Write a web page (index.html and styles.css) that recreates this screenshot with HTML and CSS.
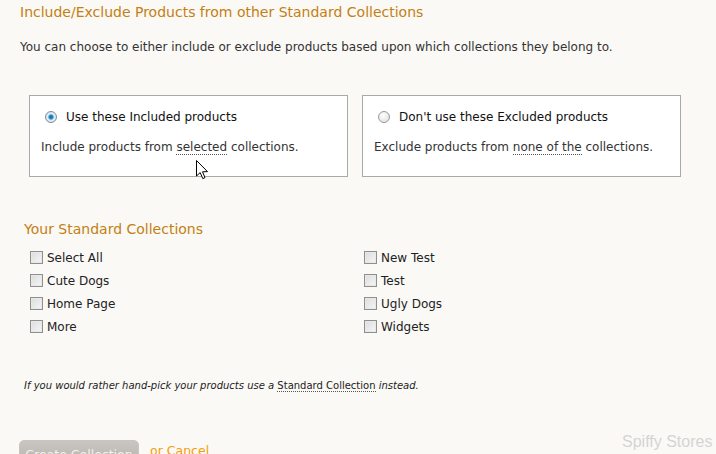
FILE: index.html
```html
<!DOCTYPE html>
<html>
<head>
<meta charset="utf-8">
<link rel="stylesheet" href="styles.css">
</head>
<body>
<div class="page">
  <h2 class="title">Include/Exclude Products from other Standard Collections</h2>
  <p class="intro">You can choose to either include or exclude products based upon which collections they belong to.</p>

  <div class="choices">
    <div class="choice">
      <label class="choice-label"><span class="radio checked"></span>Use these Included products</label>
      <p class="choice-desc">Include products from <span class="dotted">selected</span> collections.</p>
    </div>
    <div class="choice">
      <label class="choice-label"><span class="radio"></span>Don't use these Excluded products</label>
      <p class="choice-desc">Exclude products from <span class="dotted">none of the</span> collections.</p>
    </div>
  </div>

  <h3 class="subtitle">Your Standard Collections</h3>
  <div class="collections">
    <div class="col">
      <label class="item"><span class="check"></span>Select All</label>
      <label class="item"><span class="check"></span>Cute Dogs</label>
      <label class="item"><span class="check"></span>Home Page</label>
      <label class="item"><span class="check"></span>More</label>
    </div>
    <div class="col">
      <label class="item"><span class="check"></span>New Test</label>
      <label class="item"><span class="check"></span>Test</label>
      <label class="item"><span class="check"></span>Ugly Dogs</label>
      <label class="item"><span class="check"></span>Widgets</label>
    </div>
  </div>

  <p class="note">If you would rather hand-pick your products use a <span class="dotted upright">Standard Collection</span> instead.</p>

  <div class="actions">
    <button class="btn">Create Collection</button>
    <a class="cancel">or Cancel</a>
  </div>
</div>

<svg class="cursor" width="13" height="20" viewBox="0 0 13 20">
  <path d="M0.5 0.5 L0.5 16 L4.2 12.6 L6.8 18.6 L9 17.6 L6.5 11.8 L11.5 11.6 Z" fill="#fff" stroke="#000" stroke-width="1" stroke-linejoin="miter"/>
</svg>
<div class="watermark">Spiffy Stores</div>
</body>
</html>
```

FILE: styles.css
```css
html, body {
  margin: 0;
  padding: 0;
  background: #faf9f6;
  height: 454px;
  overflow: hidden;
}
body {
  font-family: "DejaVu Sans", Verdana, sans-serif;
  font-size: 12px;
  color: #222;
  position: relative;
}
.page {
  padding: 2px 0 0 20px;
}
.title {
  margin: 0;
  font-weight: normal;
  font-size: 14px;
  line-height: 20px;
  color: #c47f12;
}
.intro {
  margin: 17px 0 0 0;
  line-height: 16px;
  color: #333;
}
.choices {
  display: flex;
  gap: 14px;
  margin: 40px 0 0 9px;
}
.choice {
  box-sizing: border-box;
  width: 319px;
  height: 82px;
  background: #fff;
  border: 1px solid #a9a9a9;
  padding: 13px 0 0 11px;
}
.choice-label {
  display: flex;
  align-items: center;
  height: 16px;
  color: #111;
}
.radio {
  box-sizing: border-box;
  width: 12px;
  height: 12px;
  border-radius: 50%;
  border: 1px solid #9a9a9a;
  background: radial-gradient(circle at 40% 35%, #fff 0, #e6e6e6 70%, #cfcfcf 100%);
  margin: 0 9px 0 4px;
}
.radio.checked {
  background: radial-gradient(circle at 50% 50%, #1a6ea8 0, #1d86c8 25%, #4aa6dc 33%, #e8eef2 45%, #cfd7dd 100%);
  border-color: #7c8e9c;
}
.choice-desc {
  margin: 14px 0 0 0;
  line-height: 16px;
  color: #333;
}
.dotted {
  border-bottom: 1px dotted #555;
}
.subtitle {
  margin: 43px 0 0 4px;
  font-weight: normal;
  font-size: 14px;
  line-height: 18px;
  color: #c47f12;
}
.collections {
  display: grid;
  grid-template-columns: 334px 200px;
  margin: 8px 0 0 10px;
}
.col {
  display: flex;
  flex-direction: column;
}
.item {
  display: flex;
  align-items: center;
  height: 23px;
  color: #222;
}
.check {
  box-sizing: border-box;
  width: 13px;
  height: 13px;
  border: 1px solid #8f8f8f;
  background: linear-gradient(135deg, #dcdcdc, #f6f6f6);
  box-shadow: inset 0 0 0 1px #e8e8e8;
  margin-right: 4px;
}
.note {
  margin: 41px 0 0 4px;
  font-size: 10px;
  font-style: italic;
  line-height: 14px;
  color: #222;
}
.note .upright {
  font-style: normal;
}
.actions {
  display: flex;
  align-items: flex-start;
  gap: 11px;
  margin: 47px 0 0 -1px;
}
.btn {
  box-sizing: border-box;
  width: 120px;
  height: 26px;
  border: 1px solid #c8c5c0;
  border-radius: 5px;
  background: linear-gradient(#c9c6c1, #b7b3ad);
  color: #f4f2ee;
  font-family: "DejaVu Sans", Verdana, sans-serif;
  font-size: 12.5px;
  padding: 4px 0 0 0;
  text-align: center;
  line-height: 16px;
}
.cancel {
  color: #f59e0b;
  font-size: 12.5px;
  line-height: 16px;
  padding-top: 3px;
}
.cursor {
  position: absolute;
  left: 196px;
  top: 160px;
}
.watermark {
  position: absolute;
  left: 622px;
  top: 432px;
  font-family: "Liberation Sans", Arial, sans-serif;
  font-size: 16px;
  color: #d4d4d4;
  line-height: 20px;
}
```
